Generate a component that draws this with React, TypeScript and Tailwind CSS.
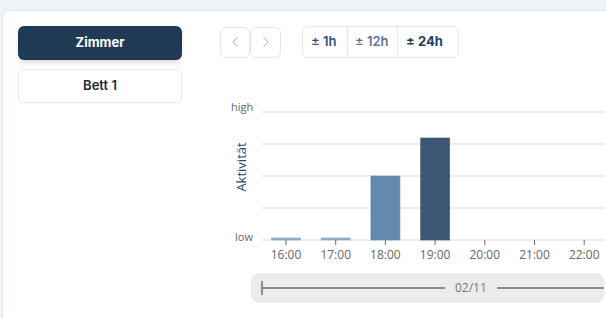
import React from "react";
import { ChevronLeft, ChevronRight } from "lucide-react";

const hours = ["16:00", "17:00", "18:00", "19:00", "20:00", "21:00", "22:00"];
const bars = [
  { h: 2, fill: "#8fa9cc" },
  { h: 2, fill: "#8fa9cc" },
  { h: 64, fill: "#6489af" },
  { h: 102, fill: "#3d5673" },
  { h: 0, fill: "" },
  { h: 0, fill: "" },
  { h: 0, fill: "" },
];
const grid = [14, 46, 78, 110, 142];

const Chart = () => {
  const base = 142;
  return (
    <svg width="386" height="168" className="block" style={{ fontFamily: '"Open Sans", sans-serif' }}>
      {grid.map((y) => (
        <line key={y} x1="41" x2="386" y1={y} y2={y} stroke="#e6eaee" strokeWidth="1.5" />
      ))}
      <text x="11" y="13" fontSize="11" fill="#666">high</text>
      <text x="15" y="143" fontSize="11" fill="#666">low</text>
      <text x="0" y="0" fontSize="13" fill="#2b4470" textAnchor="middle" transform="translate(26 69) rotate(-90)">
        Aktivität
      </text>
      {hours.map((h, i) => {
        const cx = 66 + i * 49.7;
        const b = bars[i];
        return (
          <g key={h}>
            {b.h > 0 && (
              <rect x={cx - 14.5} y={base - b.h} width="29" height={b.h} fill={b.fill} stroke={b.fill} strokeOpacity="0.6" />
            )}
            <line x1={cx} x2={cx} y1={base} y2={base + 5} stroke="#666" strokeWidth="1" />
            <text x={cx} y="161" fontSize="12" fill="#666" textAnchor="middle">{h}</text>
          </g>
        );
      })}
    </svg>
  );
};

export default function App() {
  return (
    <div className="w-[606px] h-[318px] overflow-hidden bg-[#eff3f7] pt-[10px] pl-[2px]" style={{ fontFamily: "Inter, sans-serif" }}>
      <div className="h-full bg-white rounded-tl-lg border-l border-t border-[#e4e8ee] flex pt-[15px] pl-[15px]">
        <div className="w-[164px] flex flex-col gap-[9px]">
          <button className="h-[34px] rounded-md bg-[#213a56] text-white text-[13px] font-bold shadow-md">
            Zimmer
          </button>
          <button className="h-[34px] rounded-md bg-white border border-[#e5e7eb] text-[#1f2937] text-[13px] font-semibold">
            Bett 1
          </button>
        </div>
        <div className="ml-[38px] flex flex-col">
          <div className="flex items-center">
            <div className="flex">
              <button className="w-[30px] h-[31px] border border-[#e3e6ea] rounded-md flex items-center justify-center text-[#a0a4aa]">
                <ChevronLeft className="w-[18px] h-[18px]" strokeWidth={1.3} />
              </button>
              <button className="w-[31px] h-[31px] border border-[#e3e6ea] rounded-md flex items-center justify-center text-[#a0a4aa]">
                <ChevronRight className="w-[18px] h-[18px]" strokeWidth={1.3} />
              </button>
            </div>
            <div className="ml-[21px] flex h-[32px] border border-[#e3e6ea] rounded-md text-[13px]">
              <button className="w-[44px] pl-[8px] text-left font-semibold text-[#34507a]">± 1h</button>
              <button className="w-[50px] pl-[7px] text-left font-semibold text-[#5f7391] border-l border-[#e3e6ea]">± 12h</button>
              <button className="w-[61px] pl-[8px] text-left font-bold text-[#243d5e] border-l border-[#e3e6ea]">± 24h</button>
            </div>
          </div>
          <div className="mt-[40px]">
            <Chart />
          </div>
          <div
            className="mt-[7px] ml-[31px] w-[353px] h-[30px] rounded-lg bg-[#ececec] flex items-center pl-[10px] text-[12px] text-[#777]"
            style={{ fontFamily: '"Open Sans", sans-serif' }}
          >
            <div className="w-[2px] h-[14px] bg-[#8a8a8a]" />
            <div className="w-[182px] h-[2px] bg-[#8a8a8a]" />
            <span className="px-[10px]">02/11</span>
            <div className="flex-1 h-[2px] bg-[#8a8a8a]" />
          </div>
        </div>
      </div>
    </div>
  );
}
